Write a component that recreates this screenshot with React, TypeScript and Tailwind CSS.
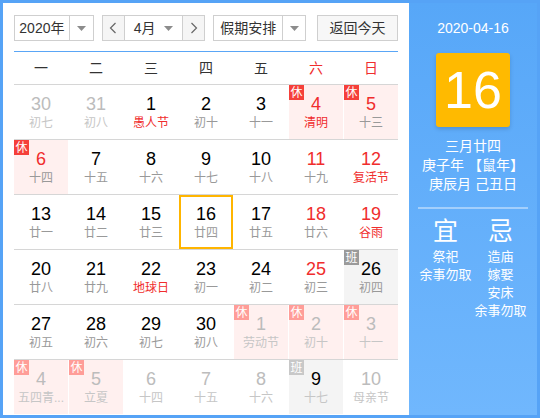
import React from 'react';

type Day = {
  n: number;
  sub: string;
  out?: boolean;
  red?: boolean;
  subRed?: boolean;
  rest?: boolean;
  work?: boolean;
  today?: boolean;
  blackNum?: boolean;
};

const rows: Day[][] = [
  [
    { n: 30, sub: '初七', out: true },
    { n: 31, sub: '初八', out: true },
    { n: 1, sub: '愚人节', subRed: true },
    { n: 2, sub: '初十' },
    { n: 3, sub: '十一' },
    { n: 4, sub: '清明', red: true, subRed: true, rest: true },
    { n: 5, sub: '十三', red: true, rest: true },
  ],
  [
    { n: 6, sub: '十四', red: true, rest: true },
    { n: 7, sub: '十五' },
    { n: 8, sub: '十六' },
    { n: 9, sub: '十七' },
    { n: 10, sub: '十八' },
    { n: 11, sub: '十九', red: true },
    { n: 12, sub: '复活节', red: true, subRed: true },
  ],
  [
    { n: 13, sub: '廿一' },
    { n: 14, sub: '廿二' },
    { n: 15, sub: '廿三' },
    { n: 16, sub: '廿四', today: true },
    { n: 17, sub: '廿五' },
    { n: 18, sub: '廿六', red: true },
    { n: 19, sub: '谷雨', red: true, subRed: true },
  ],
  [
    { n: 20, sub: '廿八' },
    { n: 21, sub: '廿九' },
    { n: 22, sub: '地球日', subRed: true },
    { n: 23, sub: '初一' },
    { n: 24, sub: '初二' },
    { n: 25, sub: '初三', red: true },
    { n: 26, sub: '初四', work: true },
  ],
  [
    { n: 27, sub: '初五' },
    { n: 28, sub: '初六' },
    { n: 29, sub: '初七' },
    { n: 30, sub: '初八' },
    { n: 1, sub: '劳动节', out: true, rest: true },
    { n: 2, sub: '初十', out: true, rest: true },
    { n: 3, sub: '十一', out: true, rest: true },
  ],
  [
    { n: 4, sub: '五四青...', out: true, rest: true },
    { n: 5, sub: '立夏', out: true, rest: true },
    { n: 6, sub: '十四', out: true },
    { n: 7, sub: '十五', out: true },
    { n: 8, sub: '十六', out: true },
    { n: 9, sub: '十七', out: true, work: true, blackNum: true },
    { n: 10, sub: '母亲节', out: true },
  ],
];

const weekdays = ['一', '二', '三', '四', '五', '六', '日'];

function Caret() {
  return (
    <svg width="9" height="5" viewBox="0 0 9 5">
      <path d="M0 0h9L4.5 5z" fill="#8c8c8c" />
    </svg>
  );
}

function Chevron({ dir }: { dir: 'l' | 'r' }) {
  return (
    <svg width="8" height="12" viewBox="0 0 8 12">
      <path
        d={dir === 'l' ? 'M6.5 1L1.5 6l5 5' : 'M1.5 1l5 5-5 5'}
        fill="none"
        stroke="#666"
        strokeWidth="1.2"
      />
    </svg>
  );
}

function Cell({ d }: { d: Day }) {
  let bg = 'bg-white';
  if (d.rest) bg = 'bg-[#fff0ef]';
  if (d.work) bg = 'bg-[#f4f4f4]';

  let numColor = 'text-black';
  if (d.red) numColor = 'text-[#f02d2d]';
  if (d.out) numColor = 'text-[#bcbcbc]';
  if (d.blackNum) numColor = 'text-black';

  let subColor = 'text-[#999]';
  if (d.subRed) subColor = 'text-[#f02d2d]';
  if (d.out) subColor = 'text-[#c6c6c6]';

  return (
    <div className={`relative h-[54px] flex flex-col items-center ${bg}`}>
      {d.rest && (
        <span
          className={`absolute left-0 top-0 w-[15px] h-[15px] flex items-center justify-center text-[12px] leading-none text-white ${d.out ? 'bg-[#ff9d98]' : 'bg-[#f5403a]'}`}
        >
          休
        </span>
      )}
      {d.work && (
        <span
          className={`absolute left-0 top-0 w-[15px] h-[15px] flex items-center justify-center text-[12px] leading-none text-white ${d.out ? 'bg-[#c8c8c8]' : 'bg-[#9a9a9a]'}`}
        >
          班
        </span>
      )}
      {d.today && <span className="absolute inset-0 border-2 border-[#ffb500]" />}
      <span className={`mt-[9px] text-[18px] leading-[20px] ${numColor}`}>{d.n}</span>
      <span className={`mt-[1px] text-[12px] leading-[16px] whitespace-nowrap ${subColor}`}>{d.sub}</span>
    </div>
  );
}

export default function App() {
  return (
    <div
      className="w-[540px] h-[418px] border-[3px] border-[#56a3f6] flex bg-white text-[#333]"
      style={{ fontFamily: '"Liberation Sans", "Noto Sans CJK SC", sans-serif' }}
    >
      {/* left calendar */}
      <div className="w-[406px] px-[11px] pt-[12px]">
        <div className="flex items-center h-[26px] text-[14px]">
          <div className="w-[80px] h-[26px] border border-[#cfcfcf] flex">
            <div className="flex-1 flex items-center justify-center">2020年</div>
            <div className="w-[24px] border-l border-[#cfcfcf] flex items-center justify-center">
              <Caret />
            </div>
          </div>
          <div className="ml-[8px] w-[104px] h-[26px] border border-[#cfcfcf] flex">
            <div className="w-[22px] bg-[#f5f5f5] border-r border-[#cfcfcf] flex items-center justify-center">
              <Chevron dir="l" />
            </div>
            <div className="flex-1 flex items-center justify-between pl-[9px] pr-[9px]">
              <span>4月</span>
              <Caret />
            </div>
            <div className="w-[22px] bg-[#f5f5f5] border-l border-[#cfcfcf] flex items-center justify-center">
              <Chevron dir="r" />
            </div>
          </div>
          <div className="ml-[8px] w-[93px] h-[26px] border border-[#cfcfcf] flex">
            <div className="flex-1 flex items-center justify-center">假期安排</div>
            <div className="w-[23px] border-l border-[#cfcfcf] flex items-center justify-center">
              <Caret />
            </div>
          </div>
          <div className="ml-[11px] w-[81px] h-[26px] border border-[#cfcfcf] bg-[#f7f7f7] flex items-center justify-center">
            返回今天
          </div>
        </div>

        <div className="mt-[10px] h-[34px] border-t border-[#5aa6f6] border-b border-b-[#d6d6d6] grid grid-cols-[repeat(7,54px)] gap-x-px text-[14px]">
          {weekdays.map((w, i) => (
            <div
              key={w}
              className={`flex items-center justify-center ${i >= 5 ? 'text-[#f02d2d]' : 'text-[#333]'}`}
            >
              {w}
            </div>
          ))}
        </div>

        {rows.map((row, ri) => (
          <div
            key={ri}
            className={`grid grid-cols-[repeat(7,54px)] gap-x-px ${ri < rows.length - 1 ? 'border-b border-[#d6d6d6]' : ''}`}
          >
            {row.map((d, ci) => (
              <Cell key={ci} d={d} />
            ))}
          </div>
        ))}
      </div>

      {/* right panel */}
      <div className="flex-1 bg-linear-to-b from-[#57a7f8] to-[#70b7fd] text-white flex flex-col items-center">
        <div className="mt-[15px] text-[14px] leading-[20px]">2020-04-16</div>
        <div className="mt-[15px] w-[74px] h-[74px] rounded-[3px] bg-[#ffba00] shadow-[0_2px_4px_rgba(0,0,0,0.15)] flex items-center justify-center text-[52px] leading-none">
          16
        </div>
        <div className="mt-[10px] text-[14px] leading-[19px] text-center">
          <div>三月廿四</div>
          <div>庚子年 【鼠年】</div>
          <div>庚辰月 己丑日</div>
        </div>
        <div className="mt-[13px] w-[110px] h-[2px] bg-[#a3cffc]" />
        <div className="mt-[7px] grid grid-cols-[55px_55px] text-center">
          <div className="flex flex-col items-center">
            <div className="text-[25px] leading-[30px]">宜</div>
            <div className="mt-[2px] text-[13px] leading-[18px] whitespace-nowrap">
              <div>祭祀</div>
              <div>余事勿取</div>
            </div>
          </div>
          <div className="flex flex-col items-center">
            <div className="text-[25px] leading-[30px]">忌</div>
            <div className="mt-[2px] text-[13px] leading-[18px] whitespace-nowrap">
              <div>造庙</div>
              <div>嫁娶</div>
              <div>安床</div>
              <div>余事勿取</div>
            </div>
          </div>
        </div>
      </div>
    </div>
  );
}
